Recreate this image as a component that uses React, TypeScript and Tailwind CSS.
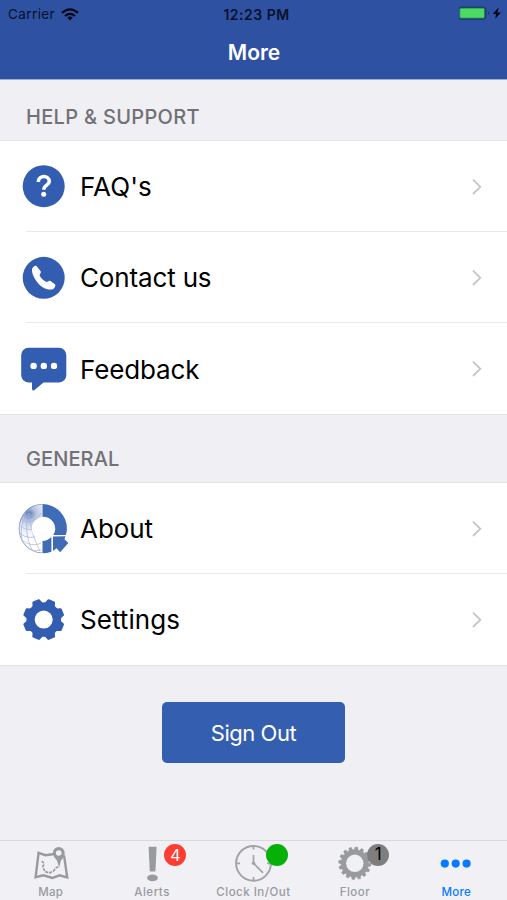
import React from 'react';

// Builds the outline of a cog centred on (cx, cy)
const cogPath = (cx: number, cy: number, outer: number, root: number, teeth: number, offset: number) => {
  const step = (Math.PI * 2) / teeth;
  const point = (r: number, a: number) => `${(cx + r * Math.cos(a)).toFixed(2)} ${(cy + r * Math.sin(a)).toFixed(2)}`;
  let d = '';
  for (let i = 0; i < teeth; i++) {
    const a = offset + i * step;
    d += `${i === 0 ? 'M' : 'L'}${point(root, a - step * 0.32)}`;
    d += `L${point(outer, a - step * 0.19)}L${point(outer, a + step * 0.19)}L${point(root, a + step * 0.32)}`;
    d += `Q${point(root - 0.9, a + step * 0.5)} ${point(root, a + step * 0.68)}`;
  }
  return d + 'Z';
};

const RowIcon: React.FC<{ children: React.ReactNode }> = ({ children }) => (
  <svg viewBox="0 0 80 64" className="h-16 w-20 shrink-0" fill="#325db0">
    {children}
  </svg>
);

const FaqIcon = () => (
  <RowIcon>
    <circle cx="43.7" cy="31.2" r="21" />
    <path d="M38.3 26.9C38.4 19.9 49.4 19.9 49.3 26.4C49.3 30.4 43.8 30 43.8 34.8" fill="none" stroke="#fff" strokeWidth="3.5" />
    <circle cx="43.7" cy="39.3" r="2.5" fill="#fff" />
  </RowIcon>
);

const PhoneIcon = () => (
  <RowIcon>
    <circle cx="43.7" cy="31.8" r="21" />
    <path
      d="M32.2 22.6C33.4 20.6 35 19.4 36.5 20L40.7 25.2C41.3 27.2 39.5 28.2 39.6 29.4C40.7 31.6 43.2 34.3 46 35.8C47.7 36.3 48.6 34.4 50.2 34.7L55.2 38.5C56 39.8 54.6 42.4 52.4 43.4C46.7 44.6 40.2 40.6 36.3 34.9C33.4 30.9 31.3 26 32.2 22.6Z"
      fill="#fff"
    />
  </RowIcon>
);

const FeedbackIcon = () => (
  <RowIcon>
    <path d="M28.3 10.8H59.2A7.1 7.1 0 0 1 66.3 17.9V38.3A7.1 7.1 0 0 1 59.2 45.4H43.5L34.2 53.2Q32 54.3 32 51.8V45.4H28.3A7.1 7.1 0 0 1 21.2 38.3V17.9A7.1 7.1 0 0 1 28.3 10.8Z" />
    <circle cx="33.6" cy="28.9" r="3.2" fill="#fff" />
    <circle cx="43.8" cy="28.9" r="3.2" fill="#fff" />
    <circle cx="54" cy="28.9" r="3.2" fill="#fff" />
  </RowIcon>
);

const AboutIcon = () => (
  <RowIcon>
    <defs>
      <radialGradient id="globe" gradientUnits="userSpaceOnUse" cx="29" cy="17" r="26">
        <stop offset="0" stopColor="#526fae" />
        <stop offset="0.25" stopColor="#b5c2df" />
        <stop offset="0.6" stopColor="#e9edf7" />
        <stop offset="1" stopColor="#fff" />
      </radialGradient>
      <clipPath id="globe-half">
        <path d="M42 7A23.3 24.6 0 0 0 42 56.2Z" />
      </clipPath>
    </defs>
    <g clipPath="url(#globe-half)" fill="none" stroke="#a3b3d7" strokeWidth="0.7">
      <path d="M42 7H18V57H42Z" fill="url(#globe)" stroke="none" />
      <path d="M42 7A23.3 24.6 0 0 0 42 56.2" stroke="#7d93c6" strokeWidth="1.6" />
      <path d="M29 16C22 23 20 31 22 43M29 16C25 27 26 40 32 53M29 16C30 29 34 43 40 54M29 16C36 22 39 30 41 42" />
      <path d="M24 15C25 21 33 21 35 14M21 20C24 28 37 26 41 16M19 27C24 35 36 34 41 26M19 35C25 42 35 42 41 36M22 43C28 48 35 49 41 46M28 51C33 54 37 54 41 53" />
    </g>
    <circle cx="43.5" cy="31.6" r="11.7" fill="#fff" />
    <g fill="#3f6cb4">
      <path d="M42.5 7.1A24.4 24.4 0 0 1 66.9 31.4Q66.9 35.3 65.8 38.1H53.2Q55.4 35.2 55.2 31.5A12.2 12.2 0 0 0 42.5 19.7Z" />
      <path d="M42.5 43.9Q47 44 51.4 40V54.7Q46.8 56.3 42.5 56.3Z" />
      <path d="M53 39.5L65.4 39.2L64.5 42.2L68.3 46L60.2 55.3L56.5 51.3L53 54Z" />
    </g>
  </RowIcon>
);

const SettingsIcon = () => (
  <RowIcon>
    <path d={cogPath(43.7, 31.6, 19.7, 16.5, 8, Math.PI / 8)} stroke="#325db0" strokeWidth="2.4" strokeLinejoin="round" />
    <circle cx="43.7" cy="31.6" r="9" fill="#fff" />
  </RowIcon>
);

interface RowProps {
  icon: React.ReactNode;
  label: string;
  textClass: string;
  last?: boolean;
}

const Row: React.FC<RowProps> = ({ icon, label, textClass, last }) => (
  <li className="relative flex flex-1 items-center bg-white">
    {icon}
    <span className={`flex-1 text-[26px] text-black ${textClass}`}>{label}</span>
    <svg viewBox="0 0 12 18" className="mr-6 h-[18px] w-3" fill="none" stroke="#c4c4c9" strokeWidth="1.8">
      <path d="M2 1.6L9.3 8.8L2 16" />
    </svg>
    {!last && <span className="absolute right-0 bottom-0 left-[26px] h-px bg-[#e9e9eb]" />}
  </li>
);

interface TabProps {
  label: string;
  active?: boolean;
  labelClass: string;
  badge?: React.ReactNode;
  children: React.ReactNode;
}

const Tab: React.FC<TabProps> = ({ label, active, labelClass, badge, children }) => (
  <div className={`relative flex flex-1 flex-col items-center ${active ? 'text-[#087aff]' : 'text-[#999a9d]'}`}>
    <svg viewBox="0 0 60 44" className="h-11 w-[60px] shrink-0">
      {children}
    </svg>
    {badge}
    <span className={`text-[11.5px] leading-[14px] font-medium whitespace-nowrap ${labelClass}`}>{label}</span>
  </div>
);

const App: React.FC = () => {
  return (
    <div className="flex h-[900px] w-[507px] flex-col overflow-hidden bg-[#efeff4] font-['Inter','Liberation_Sans',sans-serif]">
      {/* Status bar and title */}
      <header className="h-20 border-b border-[#9dadd8] bg-[#2e51a2]">
        <div className="grid h-7 grid-cols-3 items-center text-[#07112c]">
          <div className="flex items-center gap-1.5 pl-2">
            <span className="text-[13.5px] tracking-[0.4px]">Carrier</span>
            <svg viewBox="0 0 18 13" className="h-[13px] w-[18px]" fill="none" stroke="#020817" strokeWidth="2.2">
              <path d="M1 4.9Q9 -2.2 17 4.9M4 8Q9 3.7 14 8" />
              <path d="M6.2 9.6Q9 7.4 11.8 9.6L9 12.5Z" fill="#020817" stroke="none" />
            </svg>
          </div>
          <span className="pl-1.5 text-center text-[14px] font-semibold tracking-[0.5px] whitespace-nowrap">12:23 PM</span>
          <svg viewBox="0 0 48 16" className="h-4 w-12 justify-self-end">
            <rect x="-0.4" y="1.2" width="27.2" height="12" rx="2.5" fill="#2b775f" stroke="#183464" strokeWidth="1" />
            <rect x="1.2" y="2.6" width="23.8" height="9.2" rx="1" fill="#4bdb63" />
            <path d="M29 5.5Q31 7.2 29 9Z" fill="#183464" />
            <path d="M39.7 1.3L33.8 8H37L36.3 12.8L41.9 6.4H38.5Z" fill="#020817" />
          </svg>
        </div>
        <h1 className="pt-[9px] pl-px text-center text-[21px] leading-8 font-semibold text-white">More</h1>
      </header>

      {/* Help & Support */}
      <section>
        <h2 className="flex h-[61px] items-center border-b border-[#e5e5e8] pt-[13px] pl-[26px] text-[20px] font-medium tracking-[0.3px] text-[#717176]">
          HELP &amp; SUPPORT
        </h2>
        <ul className="flex h-[273px] flex-col">
          <Row icon={<FaqIcon />} label="FAQ's" textClass="tracking-[0.1px]" />
          <Row icon={<PhoneIcon />} label="Contact us" textClass="tracking-[-0.15px]" />
          <Row icon={<FeedbackIcon />} label="Feedback" textClass="pt-px tracking-[-0.15px]" last />
        </ul>
      </section>

      {/* General */}
      <section>
        <h2 className="flex h-[69px] items-center border-y border-[#e2e2e5] pt-[21px] pl-[26px] text-[20px] font-medium tracking-[0.1px] text-[#717176]">
          GENERAL
        </h2>
        <ul className="flex h-[182px] flex-col">
          <Row icon={<AboutIcon />} label="About" textClass="tracking-[-0.05px]" />
          <Row icon={<SettingsIcon />} label="Settings" textClass="tracking-[0.05px]" last />
        </ul>
      </section>

      <div className="flex flex-1 items-start justify-center border-t border-[#e4e4e7] pt-9">
        <button className="h-[61px] w-[183px] rounded-[5px] bg-[#345eaf] pt-px text-[22px] tracking-[-0.45px] text-white">Sign Out</button>
      </div>

      {/* Tab bar */}
      <nav className="flex h-[60px] border-t border-[#d8d8dd] bg-[#f0f0f5]">
        <Tab label="Map" labelClass="tracking-[0.3px]">
          <g transform="translate(-0.6 0)">
            <g fill="none" stroke="currentColor" strokeWidth="2.4">
              <path d="M34 13L25 14.2L18.2 11.8L15.2 36.2L23 34.3L32 37L39 34.3L46.8 36.3L43.8 15.5L42 15" />
              <path d="M21.5 20L23.5 22.5L22.5 26L24.5 30.5L29 32L33 30L36 26.5L38 26" strokeWidth="1.7" strokeDasharray="3 1.1" />
            </g>
            <path fillRule="evenodd" d="M38.3 6A6 6 0 0 0 32.4 12Q32.8 16 36.6 19.5L38.8 26.5L40.5 19.5Q44.2 16 44.3 12A6 6 0 0 0 38.3 6ZM38.3 9.2A2.8 2.8 0 1 1 38.3 14.8A2.8 2.8 0 1 1 38.3 9.2Z" fill="currentColor" />
          </g>
        </Tab>
        <Tab
          label="Alerts"
          labelClass="tracking-[0.55px]"
          badge={
            <span className="absolute top-[3px] left-[63px] flex size-[22px] items-center justify-center rounded-full bg-[#fc3d31] text-[16px] text-white">4</span>
          }
        >
          <path d="M26.6 5.7H34.6L33.4 30.5H27.8Z" fill="currentColor" />
          <ellipse cx="30.5" cy="36.9" rx="5.4" ry="3.4" fill="currentColor" />
        </Tab>
        <Tab
          label="Clock In/Out"
          labelClass="tracking-[0.5px]"
          badge={<span className="absolute top-[3px] left-[63px] size-[22px] rounded-full bg-[#05b106]" />}
        >
          <g fill="none" stroke="#a3a4a7" strokeWidth="1.7">
            <circle cx="29.5" cy="22.3" r="17.4" strokeWidth="2" />
            <path d="M29.5 14V22.3L39 31.8M29.5 5V8.5M29.5 36V39.5M12.5 22.3H16M43 22.3H46.5" />
          </g>
          <circle cx="29.5" cy="22.3" r="1.8" fill="#a3a4a7" />
        </Tab>
        <Tab
          label="Floor"
          labelClass="tracking-[0.45px]"
          badge={
            <span className="absolute top-[3px] left-[63px] flex size-[22px] items-center justify-center rounded-full bg-[#7e7e7f] text-[17px] text-black">1</span>
          }
        >
          <path d={cogPath(29.8, 22.3, 16.2, 14, 16, 0.1)} fill="currentColor" stroke="currentColor" strokeWidth="0.6" />
          <circle cx="29.8" cy="22.3" r="8.7" fill="#f0f0f5" />
        </Tab>
        <Tab label="More" labelClass="tracking-[0.3px]" active>
          <g fill="currentColor">
            <circle cx="18.8" cy="22.6" r="4.1" />
            <circle cx="29.7" cy="22.6" r="4.1" />
            <circle cx="40.6" cy="22.6" r="4.1" />
          </g>
        </Tab>
      </nav>
    </div>
  );
};

export default App;
